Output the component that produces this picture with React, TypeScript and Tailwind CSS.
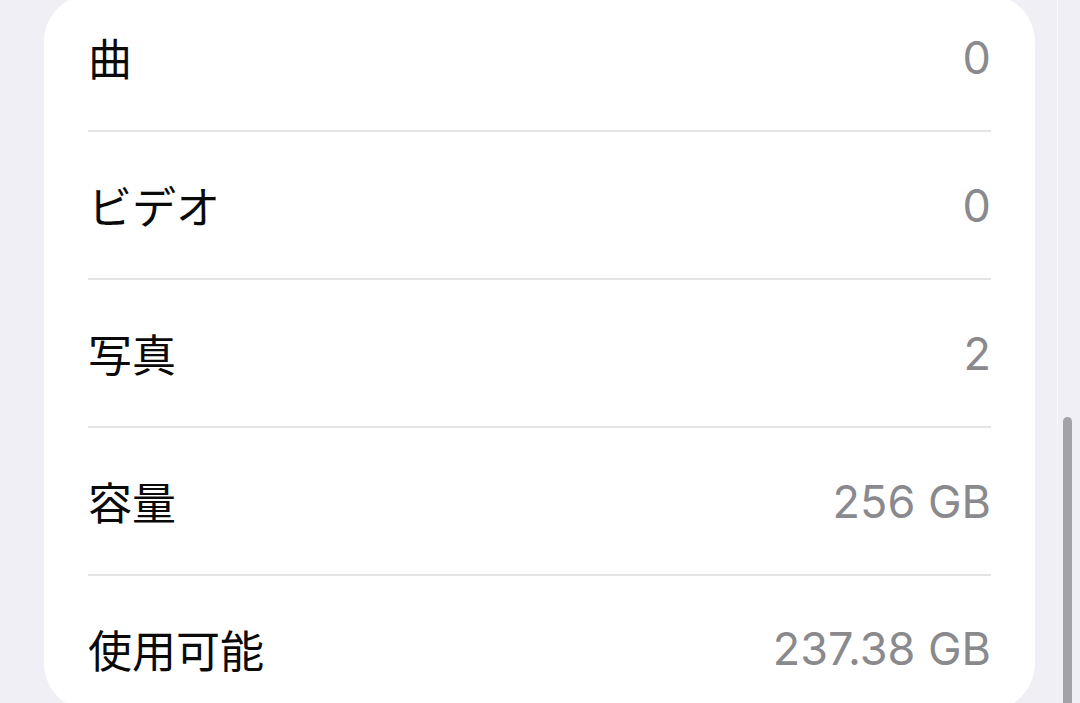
const rows = [
  { label: "曲", value: "0" },
  { label: "ビデオ", value: "0" },
  { label: "写真", value: "2" },
  { label: "容量", value: "256 GB" },
  { label: "使用可能", value: "237.38 GB" },
];

export default function App() {
  return (
    <div className="relative h-[703px] w-[1080px] overflow-hidden bg-[#f0eff5]">
      <div className="ml-[44px] mt-[-6px] w-[991px] rounded-[48px] bg-white px-[44px]">
        {rows.map((row, i) => {
          const first = i === 0;
          const last = i === rows.length - 1;
          return (
            <div
              key={row.label}
              className={
                first
                  ? "flex h-[138px] items-center justify-between border-b-2 border-[#e4e4e7] pb-[10px]"
                  : last
                  ? "flex h-[135px] items-center justify-between pt-[10px]"
                  : "flex h-[148px] items-center justify-between border-b-2 border-[#e4e4e7]"
              }
            >
              <span className="text-[44px] leading-none text-[#0a0a0a] [font-family:'Noto_Sans_CJK_JP',sans-serif]">
                {row.label}
              </span>
              <span className="text-[45px] leading-none text-[#8a8a8e] [font-family:Inter,'Liberation_Sans',sans-serif]">
                {row.value}
              </span>
            </div>
          );
        })}
      </div>

      {/* scroll indicator */}
      <div className="absolute left-[1057px] top-0 h-full w-px bg-white/50" />
      <div className="absolute left-[1063px] top-[417px] h-[300px] w-[9px] rounded-full bg-[#a3a2a8]" />
    </div>
  );
}
